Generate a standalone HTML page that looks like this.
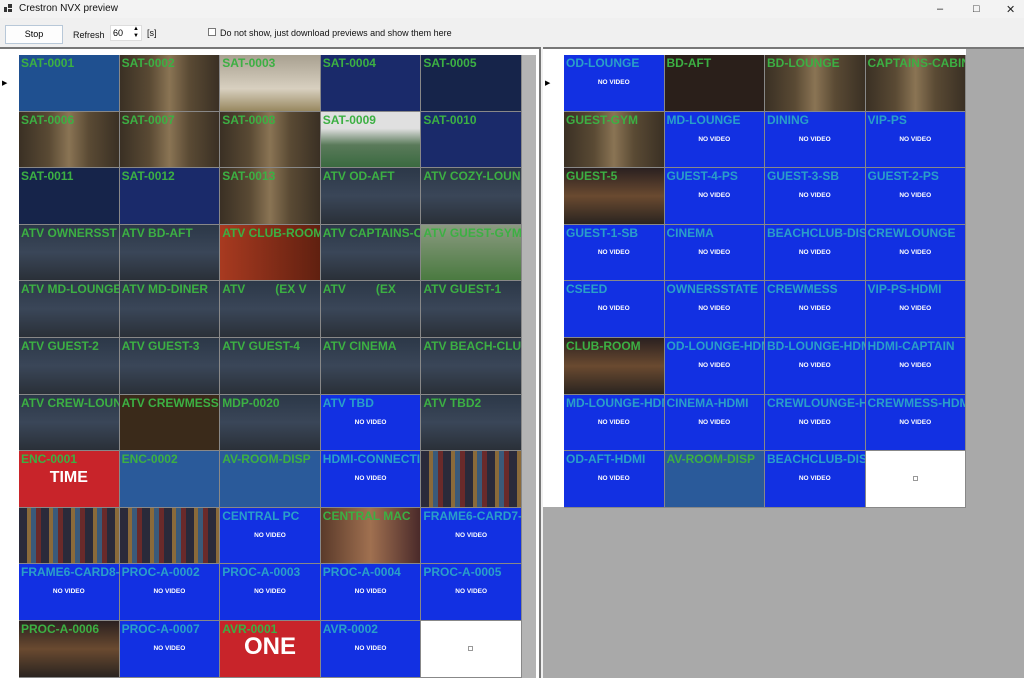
<!DOCTYPE html>
<html><head><meta charset="utf-8"><style>
*{margin:0;padding:0;box-sizing:border-box}
body{width:1024px;height:678px;overflow:hidden;background:#f0f0f0;font-family:"Liberation Sans",sans-serif;position:relative}
.title{position:absolute;left:0;top:0;width:1024px;height:18px;background:#f3f3f3;font-size:10px;color:#111}
.title span{position:absolute;left:19px;top:3px}
.ico{position:absolute;left:4px;top:4px;width:8px;height:8px}
.wc{position:absolute;top:1px;font-size:11px;color:#222}
.btn{position:absolute;left:5px;top:25px;width:58px;height:19px;border:1px solid #b8c8d8;background:#fdfdfd;font-size:9px;text-align:center;line-height:17px}
.t{position:absolute;font-size:9px;color:#111}
.spin{position:absolute;left:110px;top:25px;width:32px;height:16px;background:#fff;border:1px solid #ddd;font-size:9px;padding:2px 0 0 2px}
.cb{position:absolute;left:208px;top:28px;width:8px;height:8px;border:1px solid #777;background:#fff}
.panel{position:absolute;top:47px;background:#fff;border-top:2px solid #777}
.grid{position:absolute;display:grid;grid-auto-rows:56.6px;background:#999;gap:0}
.grid div{position:relative;overflow:hidden;border-right:1px solid #888;border-bottom:1px solid #888}
.grid b{position:absolute;left:2px;top:1px;font-size:12px;font-weight:bold;color:#3cb043;white-space:nowrap}
.nv{background:#1230e2}
.nv b{color:#2a9fc8!important}
.nv i{position:absolute;left:0;right:0;top:24px;text-align:center;font-style:normal;font-size:6.5px;font-weight:bold;color:#fff}
.wh{background:#fff}
.wh i{position:absolute;left:47px;top:25px;width:5px;height:5px;border:1px solid #999}
.vid{background:linear-gradient(90deg,#3a3024,#5a4a34 30%,#8a7454 50%,#5a4a34 70%,#3a3024)}
.city{background:linear-gradient(180deg,#2c3848,#3a4658 50%,#2a3038)}
.sat1{background:#1f5090}
.navy{background:#1a2a6a}
.navyd{background:#16244a}
.gray{background:linear-gradient(180deg,#a8a090,#d8d0c0 60%,#988860)}
.stad{background:linear-gradient(180deg,#e0e0e0 30%,#5a7a5a 60%,#3a6a40)}
.red{background:#c8242a}
.red em,.one em{position:absolute;left:0;right:0;top:18px;text-align:center;color:#fff;font-style:normal;font-weight:bold;font-size:16px}
.one em{font-size:24px;top:12px}
.blu{background:#2a5a9a}
.post{background:repeating-linear-gradient(90deg,#2a2a3a 0 8px,#8a6a3a 8px 12px,#3a5a7a 12px 17px,#6a2a2a 17px 22px)}
.box{background:linear-gradient(90deg,#5a3a2a,#a07050,#4a2a2a)}
.brn{background:#3a2a1a}
.menu{background:linear-gradient(180deg,#2a2020,#6a4a30 50%,#2a2420)}
.grn{background:linear-gradient(180deg,#8a9a80,#4a7a40)}
.rd2{background:linear-gradient(90deg,#a83a20,#602010)}
.dk{background:#2a1f1a}
</style></head><body>
<div class="title"><svg class="ico" viewBox="0 0 8 8"><rect x="0" y="3" width="3" height="5" fill="#333"/><rect x="4" y="0" width="4" height="4" fill="#333"/><rect x="4" y="5" width="4" height="3" fill="#333"/></svg><span>Crestron NVX preview</span>
<span class="wc" style="left:937px">&#8211;</span><span class="wc" style="left:973px">&#9633;</span><span class="wc" style="left:1006px">&#10005;</span></div>
<div class="btn">Stop</div>
<div class="t" style="left:73px;top:30px">Refresh</div>
<div class="spin">60<span style="position:absolute;right:2px;top:0;font-size:6px;line-height:7px">&#9650;<br>&#9660;</span></div>
<div class="t" style="left:147px;top:28px">[s]</div>
<div class="cb"></div>
<div class="t" style="left:220px;top:28px">Do not show, just download previews and show them here</div>

<div class="panel" style="left:0;width:541px;height:631px;border-right:2px solid #777"></div>
<div style="position:absolute;left:522px;top:55px;width:14px;height:623px;background:#b4b4b4"></div>
<div class="panel" style="left:543px;width:481px;height:631px;background:#a9a9a9"></div>
<div style="position:absolute;left:543px;top:49px;width:423px;height:458px;background:#fff"></div>
<div style="position:absolute;left:2px;top:79px;font-size:7px">&#9654;</div>
<div style="position:absolute;left:545px;top:79px;font-size:7px">&#9654;</div>

<div class="grid" style="left:19px;top:55px;grid-template-columns:repeat(5,100.6px)">
<div class="sat1"><b>SAT-0001</b></div><div class="vid"><b>SAT-0002</b></div><div class="gray"><b>SAT-0003</b></div><div class="navy"><b>SAT-0004</b></div><div class="navyd"><b>SAT-0005</b></div>
<div class="vid"><b>SAT-0006</b></div><div class="vid"><b>SAT-0007</b></div><div class="vid"><b>SAT-0008</b></div><div class="stad"><b>SAT-0009</b></div><div class="navy"><b>SAT-0010</b></div>
<div class="navyd"><b>SAT-0011</b></div><div class="navy"><b>SAT-0012</b></div><div class="vid"><b>SAT-0013</b></div><div class="city"><b>ATV OD-AFT</b></div><div class="city"><b>ATV COZY-LOUN</b></div>
<div class="city"><b>ATV OWNERSST</b></div><div class="city"><b>ATV BD-AFT</b></div><div class="rd2"><b>ATV CLUB-ROOM</b></div><div class="city"><b>ATV CAPTAINS-C</b></div><div class="grn"><b>ATV GUEST-GYM</b></div>
<div class="city"><b>ATV MD-LOUNGE</b></div><div class="city"><b>ATV MD-DINER</b></div><div class="city"><b>ATV &nbsp; &nbsp; &nbsp; &nbsp; (EX V</b></div><div class="city"><b>ATV &nbsp; &nbsp; &nbsp; &nbsp; (EX</b></div><div class="city"><b>ATV GUEST-1</b></div>
<div class="city"><b>ATV GUEST-2</b></div><div class="city"><b>ATV GUEST-3</b></div><div class="city"><b>ATV GUEST-4</b></div><div class="city"><b>ATV CINEMA</b></div><div class="city"><b>ATV BEACH-CLU</b></div>
<div class="city"><b>ATV CREW-LOUN</b></div><div class="brn"><b>ATV CREWMESS</b></div><div class="city"><b>MDP-0020</b></div><div class="nv"><b>ATV TBD</b><i>NO VIDEO</i></div><div class="city"><b>ATV TBD2</b></div>
<div class="red"><b>ENC-0001</b><em>TIME</em></div><div class="blu"><b>ENC-0002</b></div><div class="blu"><b>AV-ROOM-DISP</b></div><div class="nv"><b>HDMI-CONNECTIO</b><i>NO VIDEO</i></div><div class="post"></div>
<div class="post"></div><div class="post"></div><div class="nv"><b>CENTRAL PC</b><i>NO VIDEO</i></div><div class="box"><b>CENTRAL MAC</b></div><div class="nv"><b>FRAME6-CARD7-</b><i>NO VIDEO</i></div>
<div class="nv"><b>FRAME6-CARD8-</b><i>NO VIDEO</i></div><div class="nv"><b>PROC-A-0002</b><i>NO VIDEO</i></div><div class="nv"><b>PROC-A-0003</b><i>NO VIDEO</i></div><div class="nv"><b>PROC-A-0004</b><i>NO VIDEO</i></div><div class="nv"><b>PROC-A-0005</b><i>NO VIDEO</i></div>
<div class="menu"><b>PROC-A-0006</b></div><div class="nv"><b>PROC-A-0007</b><i>NO VIDEO</i></div><div class="red one"><b>AVR-0001</b><em>ONE</em></div><div class="nv"><b>AVR-0002</b><i>NO VIDEO</i></div><div class="wh"><i></i></div>
</div>

<div class="grid" style="left:564px;top:55px;grid-template-columns:repeat(4,100.5px)">
<div class="nv"><b>OD-LOUNGE</b><i>NO VIDEO</i></div><div class="dk"><b>BD-AFT</b></div><div class="vid"><b>BD-LOUNGE</b></div><div class="vid"><b>CAPTAINS-CABIN</b></div>
<div class="vid"><b>GUEST-GYM</b></div><div class="nv"><b>MD-LOUNGE</b><i>NO VIDEO</i></div><div class="nv"><b>DINING</b><i>NO VIDEO</i></div><div class="nv"><b>VIP-PS</b><i>NO VIDEO</i></div>
<div class="menu"><b>GUEST-5</b></div><div class="nv"><b>GUEST-4-PS</b><i>NO VIDEO</i></div><div class="nv"><b>GUEST-3-SB</b><i>NO VIDEO</i></div><div class="nv"><b>GUEST-2-PS</b><i>NO VIDEO</i></div>
<div class="nv"><b>GUEST-1-SB</b><i>NO VIDEO</i></div><div class="nv"><b>CINEMA</b><i>NO VIDEO</i></div><div class="nv"><b>BEACHCLUB-DIS</b><i>NO VIDEO</i></div><div class="nv"><b>CREWLOUNGE</b><i>NO VIDEO</i></div>
<div class="nv"><b>CSEED</b><i>NO VIDEO</i></div><div class="nv"><b>OWNERSSTATE</b><i>NO VIDEO</i></div><div class="nv"><b>CREWMESS</b><i>NO VIDEO</i></div><div class="nv"><b>VIP-PS-HDMI</b><i>NO VIDEO</i></div>
<div class="menu"><b>CLUB-ROOM</b></div><div class="nv"><b>OD-LOUNGE-HDM</b><i>NO VIDEO</i></div><div class="nv"><b>BD-LOUNGE-HDM</b><i>NO VIDEO</i></div><div class="nv"><b>HDMI-CAPTAIN</b><i>NO VIDEO</i></div>
<div class="nv"><b>MD-LOUNGE-HDM</b><i>NO VIDEO</i></div><div class="nv"><b>CINEMA-HDMI</b><i>NO VIDEO</i></div><div class="nv"><b>CREWLOUNGE-H</b><i>NO VIDEO</i></div><div class="nv"><b>CREWMESS-HDM</b><i>NO VIDEO</i></div>
<div class="nv"><b>OD-AFT-HDMI</b><i>NO VIDEO</i></div><div class="blu"><b>AV-ROOM-DISP</b></div><div class="nv"><b>BEACHCLUB-DIS</b><i>NO VIDEO</i></div><div class="wh"><i></i></div>
</div>
</body></html>
